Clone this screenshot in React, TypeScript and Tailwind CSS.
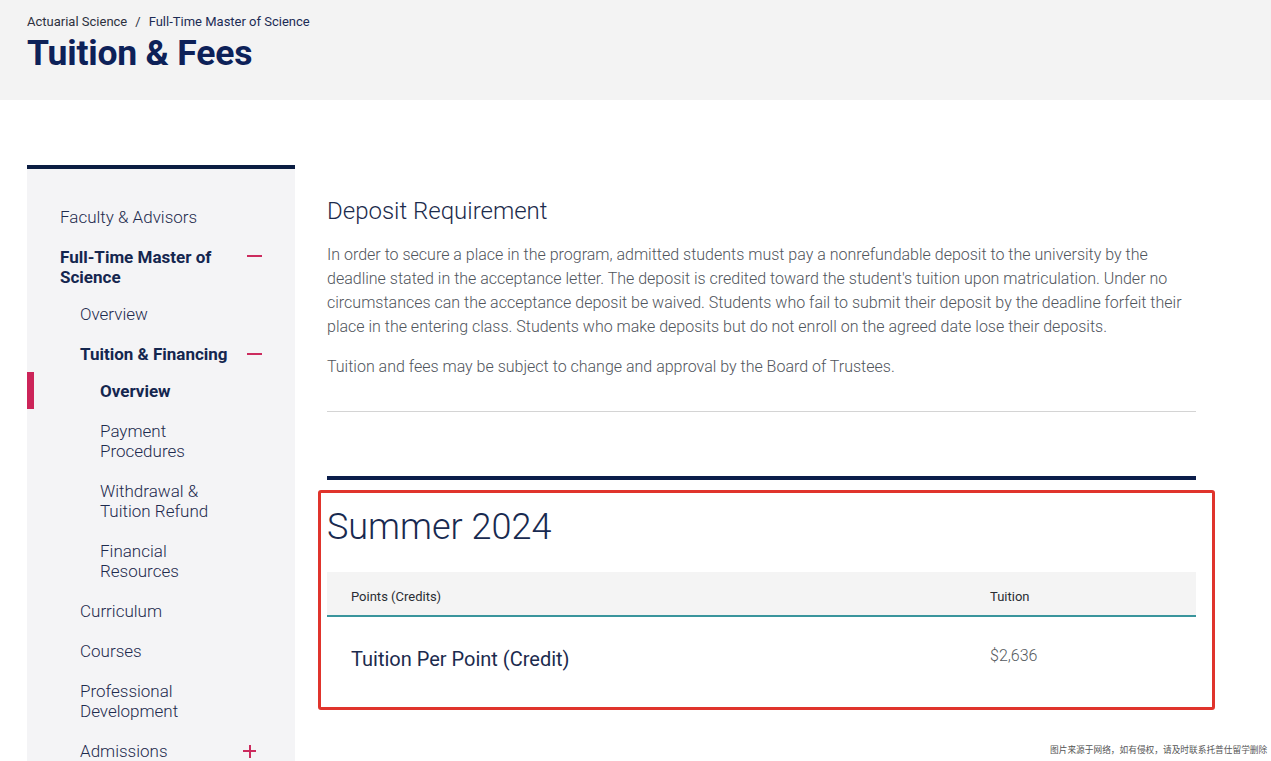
import React from "react";

function Dash() {
  return <span className="block w-[15px] h-[2px] bg-[#cc2b5e]" />;
}

function Plus() {
  return (
    <span className="relative block w-[13px] h-[13px]">
      <span className="absolute left-0 top-[5.5px] w-[13px] h-[2px] bg-[#cc2b5e]" />
      <span className="absolute top-0 left-[5.5px] w-[2px] h-[13px] bg-[#cc2b5e]" />
    </span>
  );
}

export default function App() {
  return (
    <div
      className="relative w-[1271px] h-[761px] overflow-hidden bg-white"
      style={{ fontFamily: "Roboto, 'Noto Sans', sans-serif" }}
    >
      {/* Header */}
      <div className="h-[100px] bg-[#f3f3f3] pl-[27px] pt-[14px]">
        <div className="text-[13px] leading-[16px] text-[#2d3140] flex items-center">
          <span>Actuarial Science</span>
          <span className="mx-[8px]">/</span>
          <span className="text-[#1c2c55]">Full-Time Master of Science</span>
        </div>
        <h1 className="mt-[3px] text-[35.5px] leading-[40px] font-bold text-[#0d2158] tracking-[-0.2px]">
          Tuition &amp; Fees
        </h1>
      </div>

      {/* Main */}
      <div className="flex pl-[27px] pt-[65px]">
        {/* Sidebar */}
        <aside className="relative w-[268px] shrink-0 border-t-4 border-[#0b1d42] bg-[#f4f4f6] h-[700px]">
          <div className="pt-[38px] pl-[33px] pr-[33px] text-[17px] leading-[20px] font-light text-[#1e2b4e]">
            <div>Faculty &amp; Advisors</div>

            <div className="mt-[20px] flex justify-between items-start">
              <span className="font-bold text-[#14264f] w-[165px]">Full-Time Master of Science</span>
              <span className="mt-[8px]"><Dash /></span>
            </div>

            <div className="mt-[17px] pl-[20px]">Overview</div>

            <div className="mt-[20px] pl-[20px] flex justify-between items-center">
              <span className="font-bold text-[#14264f]">Tuition &amp; Financing</span>
              <Dash />
            </div>

            <div className="mt-[17px] pl-[40px] font-bold text-[#14264f]">Overview</div>

            <div className="mt-[20px] pl-[40px] w-[150px]">Payment Procedures</div>
            <div className="mt-[20px] pl-[40px]">
              Withdrawal &amp;
              <br />
              Tuition Refund
            </div>
            <div className="mt-[20px] pl-[40px] w-[150px]">Financial Resources</div>

            <div className="mt-[20px] pl-[20px]">Curriculum</div>
            <div className="mt-[20px] pl-[20px]">Courses</div>
            <div className="mt-[20px] pl-[20px] w-[130px]">Professional Development</div>
            <div className="mt-[20px] pl-[20px] flex justify-between items-center">
              <span>Admissions</span>
              <span className="mr-[6px]"><Plus /></span>
            </div>
          </div>
          {/* active marker */}
          <span className="absolute left-0 top-[203px] w-[7px] h-[37px] bg-[#cc2459]" />
        </aside>

        {/* Content */}
        <main className="ml-[32px] w-[869px]">
          <h2 className="mt-[31px] text-[24px] leading-[30px] font-light text-[#1c2b4c]">
            Deposit Requirement
          </h2>
          <p className="mt-[17px] text-[16px] leading-[24px] font-light text-[#50555c]">
            In order to secure a place in the program, admitted students must pay a nonrefundable deposit to the
            university by the deadline stated in the acceptance letter. The deposit is credited toward the
            student's tuition upon matriculation. Under no circumstances can the acceptance deposit be waived.
            Students who fail to submit their deposit by the deadline forfeit their place in the entering class.
            Students who make deposits but do not enroll on the agreed date lose their deposits.
          </p>
          <p className="mt-[16px] text-[16px] leading-[24px] font-light text-[#50555c]">
            Tuition and fees may be subject to change and approval by the Board of Trustees.
          </p>
          <div className="mt-[32px] h-px bg-[#d4d4d4]" />

          <section className="relative mt-[64px]">
            <div className="h-[4px] bg-[#0b1d4a]" />
            <h2 className="mt-[25px] text-[36px] leading-[44px] font-light text-[#182a50]">Summer 2024</h2>
            <div className="mt-[23px]">
              <div className="flex items-center h-[45px] pt-[6px] bg-[#f4f4f4] border-b-2 border-[#3a959c] text-[13px] text-[#2a2d33]">
                <div className="pl-[24px] w-[663px]">Points (Credits)</div>
                <div>Tuition</div>
              </div>
              <div className="flex items-center h-[93px] border-b border-[#1b1f40]">
                <div className="pl-[24px] w-[663px] text-[20px] text-[#1c2b4e] -mt-[8px]">
                  Tuition Per Point (Credit)
                </div>
                <div className="text-[16px] font-light text-[#555a60] -mt-[14px]">$2,636</div>
              </div>
            </div>
            {/* annotation box */}
            <div className="absolute left-[-9px] top-[14px] w-[897px] h-[220px] border-[3px] border-[#e0342c] rounded-[3px] pointer-events-none" />
          </section>
        </main>
      </div>

      {/* watermark */}
      <div
        className="absolute left-[1050px] top-[744px] whitespace-nowrap text-[8.7px] leading-[12px] text-[#555555]"
        style={{ fontFamily: "'Noto Sans CJK SC', sans-serif" }}
      >
        图片来源于网络，如有侵权，请及时联系托普仕留学删除
      </div>
    </div>
  );
}
